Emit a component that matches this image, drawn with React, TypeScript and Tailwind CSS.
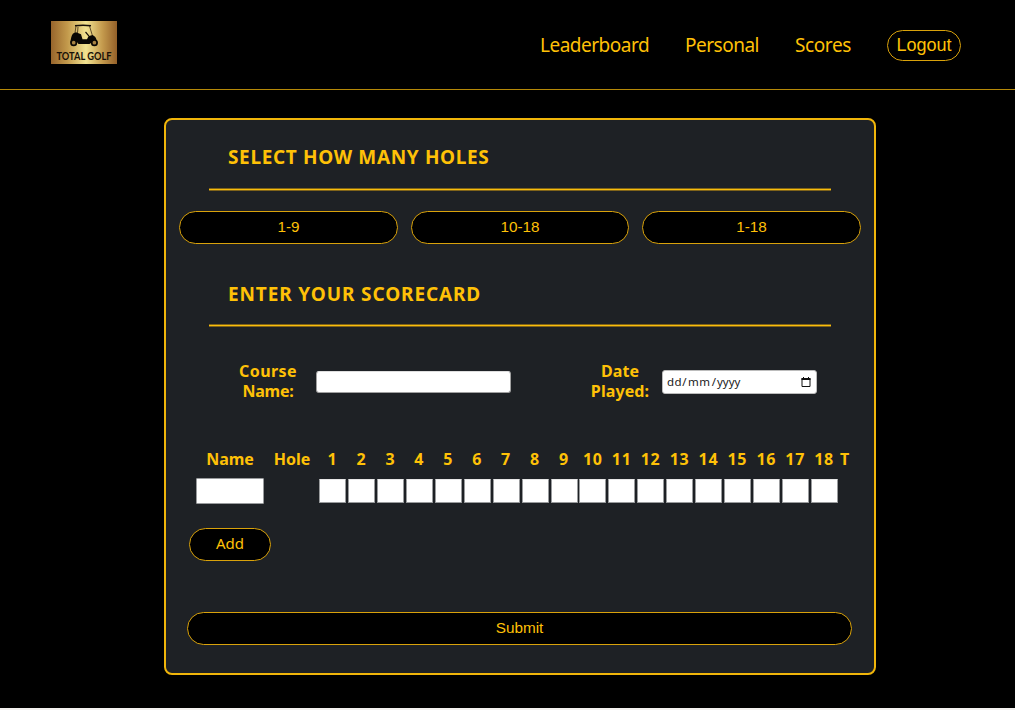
import React from "react";

const holes = Array.from({ length: 18 }, (_, i) => i + 1);

const pill =
  "flex items-center justify-center rounded-full border border-[#d9a20b] bg-black font-['Liberation_Sans',sans-serif] text-[#ffc107]";

function Logo() {
  return (
    <svg className="overflow-visible" width="66" height="43" viewBox="0 0 66 43" aria-label="Total Golf">
      <defs>
        <linearGradient id="gold" x1="0" x2="1" y1="0" y2="0">
          <stop offset="0" stopColor="#98652c" />
          <stop offset="0.25" stopColor="#c39a4c" />
          <stop offset="0.53" stopColor="#f2e391" />
          <stop offset="0.78" stopColor="#c49a4d" />
          <stop offset="1" stopColor="#946029" />
        </linearGradient>
      </defs>
      <rect width="66" height="43" fill="url(#gold)" />
      <path d="M24 4.7Q32 3.6 40 4.7" fill="none" stroke="#171008" strokeWidth="1.5" />
      <path d="M25 5L23.5 15M38.5 5L41.5 15M27 6L26.4 13" fill="none" stroke="#3c2b13" strokeWidth="0.8" />
      <path d="M22 12.5L25 11.2L30 13.3L31.5 18.2H36L37.5 15.2L41.5 14Q45 15.6 45.5 19L46.2 22H40L38.5 23H27.5L25.5 20.5L19.5 21.8Q19.7 15.5 22 12.5Z" fill="#090704" />
      <path d="M34.5 11L38 15.2" stroke="#171008" strokeWidth="1.2" />
      <circle cx="22.7" cy="21.7" r="2.7" fill="#a88343" stroke="#090704" strokeWidth="1.7" />
      <circle cx="43.4" cy="21.7" r="2.7" fill="#a88343" stroke="#090704" strokeWidth="1.7" />
      <text transform="translate(5.5 38.5) scale(0.82 1)" fontFamily="Lato, sans-serif" fontSize="11.3" fontWeight="700" fill="#171008">TOTAL GOLF</text>
    </svg>
  );
}

function Rule() {
  return <div className="ml-[43px] h-[3px] w-[622px] border-y border-[#80641a] bg-[#f9bd0a]" />;
}

export default function App() {
  return (
    <div className="flex h-[710px] w-full flex-col overflow-hidden border-b-2 border-[#f3f1ef] bg-black font-['Noto_Sans',sans-serif] text-[#ffc107]">
      <header className="flex h-[90px] shrink-0 items-start border-b border-b-[#b58908] pl-[51px] pt-[21px]">
        <Logo />
        <nav className="ml-[423px] mt-[8px] flex h-[31px] items-center text-[19px] leading-[30px]">
          <a className="w-[145px] whitespace-nowrap tracking-[-0.5px]">Leaderboard</a>
          <a className="w-[110px] whitespace-nowrap tracking-[-0.5px]">Personal</a>
          <a className="w-[92px] whitespace-nowrap tracking-[-0.4px]">Scores</a>
          <button className={`${pill} mt-px h-[31px] w-[74px] text-[18px]`}>Logout</button>
        </nav>
      </header>

      <main className="ml-[164px] mt-[28px] flex h-[557px] w-[712px] flex-col rounded-[8px] border-2 border-[#f0b50a] bg-[#1e2125]">
        <h2 className="mt-[22px] h-[30px] pl-[62px] text-[19px] font-bold leading-[30px]">
          <span className="whitespace-nowrap tracking-[0.65px]">SELECT HOW MANY HOLES</span>
        </h2>
        <div className="mt-[16px]"><Rule /></div>
        <div className="ml-[13px] mt-[20px] flex gap-[13px]">
          <button className={`${pill} h-[33px] w-[219px] pb-px text-[15.3px]`}>1-9</button>
          <button className={`${pill} h-[33px] w-[218px] pb-px text-[15.3px]`}>10-18</button>
          <button className={`${pill} h-[33px] w-[219px] pb-px text-[15.3px]`}>1-18</button>
        </div>

        <h2 className="mt-[35px] h-[30px] pl-[62px] text-[19px] font-bold leading-[30px]">
          <span className="whitespace-nowrap tracking-[0.88px]">ENTER YOUR SCORECARD</span>
        </h2>
        <div className="mt-[15px]"><Rule /></div>

        <div className="mt-[34px] flex h-[40px] items-center text-center text-[16px] font-bold leading-[20px]">
          <label className="ml-[67px] w-[70px] tracking-[0.4px]">Course<br /><span className="tracking-[-0.2px]">Name:</span></label>
          <input className="ml-[13px] mt-[2px] h-[22px] w-[195px] rounded-[3px] border border-[#a0a0a0] border-t-[#dedede] bg-white px-1 text-[12px] text-black" />
          <label className="ml-[74px] w-[70px] tracking-[0.1px]">Date<br />Played:</label>
          <div className="ml-[7px] mt-[2px] flex h-[24px] w-[155px] items-center rounded-[3px] border border-[#bcbcbc] bg-white pb-px pl-[4px] pr-[5px] text-[11.5px] font-normal text-[#202020]">
            <span className="w-[14px] text-left tracking-[0.4px]">dd</span>
            <span className="w-[7px]">/</span>
            <span className="w-[23px] text-left tracking-[0.5px]">mm</span>
            <span className="w-[6px]">/</span>
            <span className="text-left">yyyy</span>
            <svg className="ml-auto" width="10" height="10" viewBox="0 0 10 10">
              <path d="M1 1.5H9V9.5H1Z" fill="none" stroke="#111" />
              <path d="M.5 1H9.5V3H.5ZM2 0h1v1H2ZM7 0h1v1H7Z" fill="#111" />
            </svg>
          </div>
        </div>

        <div className="mt-[46px] flex h-[24px] items-center text-center text-[16px] font-bold leading-[24px]">
          <span className="ml-[30px] w-[68px] tracking-[0px]">Name</span>
          <span className="ml-[8px] w-[40px] tracking-[0px]">Hole</span>
          <div className="ml-[6px] flex">
            {holes.map((hole) => (
              <span key={hole} className="w-[28.93px] tracking-[0.7px]">{hole}</span>
            ))}
          </div>
          <span className="w-[12px]">T</span>
        </div>
        <div className="mt-[7px] flex h-[26px] items-center">
          <input className="ml-[30px] h-[26px] w-[68px] rounded-[1px] border border-[#999b9d] bg-white" />
          <div className="ml-[55px] flex">
            {holes.map((hole) => (
              <div key={hole} className="w-[28.95px]">
                <input className="block h-[24px] w-[27px] rounded-[1px] border border-[#999b9d] border-t-[#e8e8e8] bg-white" />
              </div>
            ))}
          </div>
        </div>
        <button className={`${pill} ml-[23px] mt-[24px] h-[33px] w-[82px] !font-['Noto_Sans',sans-serif] pb-[2px] text-[15px]`}>Add</button>
        <button className={`${pill} ml-[21px] mt-[51px] h-[33px] w-[665px] pb-px text-[15.3px]`}>Submit</button>
      </main>
    </div>
  );
}
